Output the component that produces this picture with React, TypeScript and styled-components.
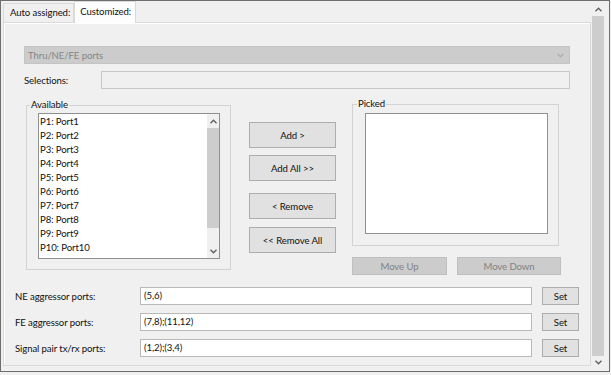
import styled, { createGlobalStyle } from "styled-components"

const GlobalStyle = createGlobalStyle`
  body {
    margin: 0;
    background: #f0f0f0;
    font-family: Lato, "Noto Sans", sans-serif;
    font-size: 9.6px;
    letter-spacing: -0.1px;
    color: #111;
  }
`

const Frame = styled.div`
  width: 610px;
  height: 372px;
  box-sizing: border-box;
  border: 1px solid #6e6e6e;
  display: flex;
`

const TabsColumn = styled.div`
  width: 588px;
  margin: 0 0 5px 2px;
  display: flex;
  flex-direction: column;
`

const TabStrip = styled.div`
  height: 21px;
  display: flex;
  align-items: flex-end;
`

const Tab = styled.div<{ $active?: boolean }>`
  box-sizing: border-box;
  height: ${(p) => (p.$active ? "22px" : "19px")};
  margin-bottom: ${(p) => (p.$active ? "-1px" : "0")};
  padding: ${(p) => (p.$active ? "0 4px 0 5px" : "0 3px 0 6px")};
  line-height: ${(p) => (p.$active ? "20px" : "18px")};
  background: ${(p) => (p.$active ? "#fdfdfd" : "#f0f0f0")};
  border: 1px solid #d9d9d9;
  border-bottom: none;
  position: relative;
  z-index: ${(p) => (p.$active ? 1 : 0)};
`

const Pane = styled.div`
  flex: 1;
  border: 1px solid #d9d9d9;
  box-shadow: inset 1px 1px 0 #fff;
  padding: 23px 11px 0 11px;
`

const TopSection = styled.div`
  padding: 0 9px;
`

const Combo = styled.div`
  box-sizing: border-box;
  height: 18px;
  border: 1px solid #c4c4c4;
  background: #cccccc;
  color: #858585;
  padding: 0 5px 0 3px;
  display: flex;
  align-items: center;
  justify-content: space-between;
`

const FieldRow = styled.div`
  display: flex;
  align-items: center;
  margin-top: 7px;
`

const Label = styled.div<{ $w: number }>`
  width: ${(p) => p.$w}px;
  flex-shrink: 0;
`

const TextBox = styled.div<{ $disabled?: boolean }>`
  box-sizing: border-box;
  flex: 1;
  height: 18px;
  line-height: 16px;
  padding-left: 3px;
  border: 1px solid ${(p) => (p.$disabled ? "#c8c8c8" : "#b9b9b9")};
  background: ${(p) => (p.$disabled ? "#f0f0f0" : "#fff")};
`

const Middle = styled.div`
  display: flex;
  align-items: flex-start;
  margin-top: 9px;
`

const Group = styled.fieldset<{ $w: number; $pl: number }>`
  box-sizing: border-box;
  width: ${(p) => p.$w}px;
  margin: 0;
  min-width: 0;
  border: 1px solid #d3d3d3;
  padding: 2px 10px 10px ${(p) => p.$pl}px;
`

const GroupLabel = styled.legend`
  padding: 0 1px;
  margin-left: -8px;
  line-height: 12px;
`

const AvailableGroup = styled(Group)`
  margin-left: 2px;
  margin-top: 1px;
`

const PickedGroup = styled(Group)`
  padding-top: 3px;
  padding-bottom: 11px;
`

const ListBox = styled.div<{ $h: number }>`
  box-sizing: border-box;
  height: ${(p) => p.$h}px;
  border: 1px solid #8e9094;
  background: #fff;
  display: flex;
`

const Items = styled.div`
  flex: 1;
  padding: 1px 0 0 1px;
`

const Item = styled.div`
  line-height: 14px;
  white-space: nowrap;
`

const ScrollBar = styled.div`
  width: 12px;
  display: flex;
  flex-direction: column;
  background: #f0f0f0;
`

const ArrowCell = styled.div<{ $h: number }>`
  height: ${(p) => p.$h}px;
  display: flex;
  align-items: center;
  justify-content: center;
  flex-shrink: 0;
`

const Thumb = styled.div<{ $h?: number }>`
  background: #cdcdcd;
  ${(p) => (p.$h ? `height: ${p.$h}px;` : "flex: 1;")}
`

const Spacer = styled.div`
  flex: 1;
`

const WindowScroll = styled(ScrollBar)`
  margin: 2px 0 2px 1px;
`

const ButtonColumn = styled.div`
  width: 87px;
  margin-left: 18px;
  padding-top: 24px;
  display: flex;
  flex-direction: column;
`

const Button = styled.button<{ $w?: number; $h?: number; $gap?: number; $disabled?: boolean }>`
  box-sizing: border-box;
  width: ${(p) => (p.$w ? `${p.$w}px` : "100%")};
  height: ${(p) => p.$h ?? 18}px;
  margin: ${(p) => p.$gap ?? 0}px 0 0 0;
  padding: 0;
  font: inherit;
  letter-spacing: inherit;
  color: ${(p) => (p.$disabled ? "#838383" : "#111")};
  background: ${(p) => (p.$disabled ? "#cccccc" : "#e1e1e1")};
  border: 1px solid ${(p) => (p.$disabled ? "#bfbfbf" : "#adadad")};
  border-radius: 0;
  flex-shrink: 0;
`

const RightColumn = styled.div`
  width: 209px;
  margin-left: 16px;
`

const MoveRow = styled.div`
  display: flex;
  gap: 10px;
  margin-top: 11px;
`

const Rows = styled.div`
  margin-top: 12px;
  display: flex;
  flex-direction: column;
  gap: 8px;
`

const PortRow = styled.div`
  display: flex;
  align-items: center;
  gap: 10px;
`

const PortLabel = styled.div`
  width: 115px;
  flex-shrink: 0;
`

const Chevron = ({ dir, color = "#606060" }: { dir: "up" | "down"; color?: string }) => (
  <svg width="7" height="5" viewBox="0 0 7 5">
    <polyline
      points={dir === "up" ? "0.5,4.2 3.5,1.2 6.5,4.2" : "0.5,0.8 3.5,3.8 6.5,0.8"}
      fill="none"
      stroke={color}
      strokeWidth="1.4"
    />
  </svg>
)

const ports = Array.from({ length: 10 }, (_, i) => `P${i + 1}: Port${i + 1}`)

const rows = [
  { label: "NE aggressor ports:", value: "(5,6)" },
  { label: "FE aggressor ports:", value: "(7,8);(11,12)" },
  { label: "Signal pair tx/rx ports:", value: "(1,2);(3,4)" },
]

export default function App() {
  return (
    <>
      <GlobalStyle />
      <Frame>
        <TabsColumn>
          <TabStrip>
            <Tab>Auto assigned:</Tab>
            <Tab $active>Customized:</Tab>
          </TabStrip>
          <Pane>
            <TopSection>
              <Combo>
                <span>Thru/NE/FE ports</span>
                <Chevron dir="down" color="#b0b0b0" />
              </Combo>
              <FieldRow>
                <Label $w={77}>Selections:</Label>
                <TextBox $disabled />
              </FieldRow>
              <Middle>
                <AvailableGroup $w={205} $pl={11}>
                  <GroupLabel>Available</GroupLabel>
                  <ListBox $h={146}>
                    <Items>
                      {ports.map((p) => (
                        <Item key={p}>{p}</Item>
                      ))}
                    </Items>
                    <ScrollBar>
                      <ArrowCell $h={14}>
                        <Chevron dir="up" />
                      </ArrowCell>
                      <Thumb $h={100} />
                      <Spacer />
                      <ArrowCell $h={14}>
                        <Chevron dir="down" />
                      </ArrowCell>
                    </ScrollBar>
                  </ListBox>
                </AvailableGroup>
                <ButtonColumn>
                  <Button $h={26}>Add &gt;</Button>
                  <Button $h={26} $gap={7}>Add All &gt;&gt;</Button>
                  <Button $h={26} $gap={12}>&lt; Remove</Button>
                  <Button $h={26} $gap={8}>&lt;&lt; Remove All</Button>
                </ButtonColumn>
                <RightColumn>
                  <PickedGroup $w={207} $pl={12}>
                    <GroupLabel>Picked</GroupLabel>
                    <ListBox $h={121} />
                  </PickedGroup>
                  <MoveRow>
                    <Button $w={95} $disabled>Move Up</Button>
                    <Button $w={104} $disabled>Move Down</Button>
                  </MoveRow>
                </RightColumn>
              </Middle>
            </TopSection>
            <Rows>
              {rows.map((r) => (
                <PortRow key={r.label}>
                  <PortLabel>{r.label}</PortLabel>
                  <TextBox>{r.value}</TextBox>
                  <Button $w={37}>Set</Button>
                </PortRow>
              ))}
            </Rows>
          </Pane>
        </TabsColumn>
        <WindowScroll>
          <ArrowCell $h={13}>
            <Chevron dir="up" />
          </ArrowCell>
          <Thumb />
          <ArrowCell $h={13}>
            <Chevron dir="down" />
          </ArrowCell>
        </WindowScroll>
      </Frame>
    </>
  )
}
